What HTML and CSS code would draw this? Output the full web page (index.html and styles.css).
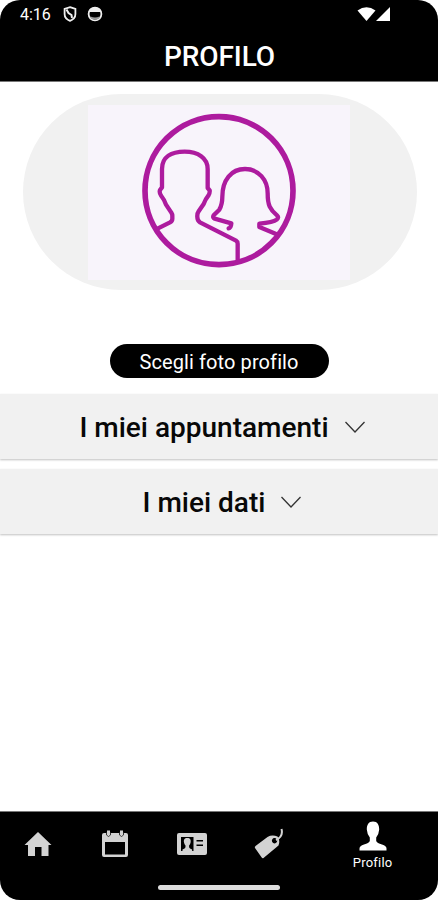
FILE: index.html
```html
<!DOCTYPE html>
<html lang="it">
<head>
    <meta charset="UTF-8">
    <meta name="viewport" content="width=device-width, initial-scale=1.0">
    <title>Profilo</title>
    <link rel="stylesheet" href="styles.css">
</head>
<body>
    <div class="phone">
        <header class="header">
            <div class="status-bar">
                <span class="time">4:16</span>
                <svg class="shield" width="14" height="16" viewBox="0 0 14 16">
                    <path d="M7 1.2 12.4 3v5c0 3-2.2 5.6-5.4 6.8C3.8 13.6 1.6 11 1.6 8V3z" fill="none" stroke="#eee" stroke-width="1.8"/>
                    <path d="M3.5 3.5 5.5 7 8.5 9 9 12" fill="none" stroke="#eee" stroke-width="2"/>
                </svg>
                <svg class="face" width="16" height="16" viewBox="0 0 16 16">
                    <circle cx="8" cy="8" r="6.4" fill="none" stroke="#eee" stroke-width="1.8"/>
                    <path d="M1.5 6h13L13 3 8 1 3 3z" fill="#eee"/>
                    <path d="M3.5 10.5Q8 12.5 12.5 10.5V12Q8 15 3.5 12z" fill="#999"/>
                </svg>
                <svg class="signal" width="34" height="16" viewBox="0 0 34 16">
                    <path d="M.5 4.5Q9.5-2 18.5 4.5L9.5 15z" fill="#fff"/>
                    <path d="M33 1v14H19z" fill="#fff"/>
                </svg>
            </div>
            <h1>PROFILO</h1>
        </header>

        <main>
            <div class="avatar">
                <svg width="262" height="175" viewBox="-126 15 786 525">
                    <rect class="avatar-bg" x="-126" y="15" width="786" height="525"/>
                    <circle cx="267" cy="272" r="222"/>
                    <path d="M84 385 120 367Q127 363 127 356V347Q127 343 124 338L108 314Q103 299 94 288Q87 278 90 270L96 262V207C96 171 124 155 164 155S233 174 233 207V264L239 271Q240 280 235 287Q226 298 221 312L206 334Q201 341 202 351Q202 362 210 367L318 422Q323 425 323 431V486"/>
                    <path d="M296 385Q303 384 304 370L254 356Q247 353 251 346L268 329Q277 313 277 290C277 240 304 207 345 207S413 240 413 280C413 316 420 329 441 346Q448 352 440 359Q430 367 388 371V381L440 403"/>
                </svg>
            </div>
            <button class="photo-button">Scegli foto profilo</button>

            <section class="row">
                <h2>I miei appuntamenti</h2>
                <svg width="22" height="14" viewBox="0 0 22 14"><path d="M1.5 2 11 12 20.5 2"/></svg>
            </section>
            <section class="row">
                <h2>I miei dati</h2>
                <svg width="22" height="14" viewBox="0 0 22 14"><path d="M1.5 2 11 12 20.5 2"/></svg>
            </section>
        </main>

        <footer>
            <nav class="tabs">
                <a class="tab">
                    <svg width="28" height="26" viewBox="0 0 28 26">
                        <path d="M14 1 27.5 14H24.5V25H17.5V16H11V25H4V14H.5z"/>
                    </svg>
                </a>
                <a class="tab">
                    <svg width="28" height="28" viewBox="0 0 28 28">
                        <path fill-rule="evenodd" d="M3 3H25Q27 3 27 5V25Q27 27 25 27H3Q1 27 1 25V5Q1 3 3 3zM4 12V24.5H24V12z"/>
                        <path class="rings" d="M5.5 2.5v2.5q2 3 4 0V2.5M18.5 2.5v2.5q2 3 4 0V2.5"/>
                        <path d="M6 .5h3v4q-1.5 2-3 0zM19 .5h3v4q-1.5 2-3 0z"/>
                    </svg>
                </a>
                <a class="tab">
                    <svg width="30" height="22" viewBox="0 0 30 22">
                        <rect width="30" height="22" rx="2"/>
                        <path d="M4 4h12.5v14H4zM19.5 7h6.500v1.500h-6.500zM19.5 11.500h6.500V13h-6.500z" fill="#000"/>
                        <path d="M10.3 5c-3 0-3.800 2-3.300 4.500q.4 2 1.500 3v1.700q-.3 1.500-3 2.300V18h9.600v-1.500q-2.700-.8-3-2.300v-1.700q1.100-1 1.500-3c.5-2.500-.3-4.500-3.300-4.500z"/>
                    </svg>
                </a>
                <a class="tab">
                    <svg width="30" height="32" viewBox="0 0 30 32">
                        <path fill-rule="evenodd" d="M1.5 18 13.5 9Q18 6.5 23.5 8.5Q26.5 13 24.5 17.5L9.5 30Q8.5 30.8 7.7 29.5L1 20Q.5 18.8 1.5 18zM20.5 10a2.7 2.7 0 1 0 .1 0z"/>
                        <path class="string" d="M22 12Q29.5 8.5 27.500 1"/>
                    </svg>
                </a>
                <a class="tab active">
                    <svg width="28" height="30" viewBox="0 0 28 30">
                        <path d="M14 .5C9.5.5 7.800 4 7.800 8.500Q8.200 13.500 10.800 16.500V20Q10 22 5 23.500Q.5 25 .5 27.500V29.500H27.500V27.500Q27.500 25 23 23.500Q18 22 17.200 20V16.500Q19.800 13.500 20.200 8.500C20.200 4 18.500.5 14 .5z"/>
                    </svg>
                    <span>Profilo</span>
                </a>
            </nav>
            <div class="home-bar"></div>
        </footer>
    </div>
</body>
</html>
```
FILE: styles.css
```css
* {
    box-sizing: border-box;
}
body {
    margin: 0;
    background-color: #fff;
    font-family: Roboto, sans-serif;
}
.phone {
    width: 438px;
    height: 900px;
    display: flex;
    flex-direction: column;
    border-radius: 20px;
    overflow: hidden;
}
.header {
    height: 82px;
    background-color: #000;
    color: #fff;
    border-bottom: 1px solid #777;
}
.status-bar {
    display: flex;
    align-items: center;
    height: 28px;
    padding: 0 47px 0 20px;
}
.time {
    width: 43px;
    font-size: 16px;
}
.face {
    margin-left: 10px;
}
.signal {
    margin-left: auto;
}
h1, h2 {
    margin: 0;
    font-weight: 500;
}
h1 {
    padding: 11px 0 0 1px;
    font-size: 28px;
    line-height: 36px;
    text-align: center;
    letter-spacing: -0.1px;
}
main {
    flex: 1;
}
.avatar {
    display: flex;
    width: 394px;
    height: 196px;
    margin: 12px auto 0 23px;
    padding: 11px 65px;
    border-radius: 98px;
    background-color: #f1f1f1;
}
.avatar path, .avatar circle {
    fill: none;
    stroke: #ad1b9e;
    stroke-width: 13px;
    stroke-linejoin: round;
    stroke-linecap: round;
}
.avatar circle {
    stroke-width: 17px;
}
.avatar-bg {
    fill: #f8f4fb;
}
.photo-button {
    display: block;
    width: 219px;
    height: 34px;
    margin: 54px auto 16px;
    padding: 2px 0 0;
    border: none;
    border-radius: 17px;
    background-color: #000;
    color: #fff;
    font-family: inherit;
    font-size: 20px;
    letter-spacing: 0.1px;
}
.row {
    display: flex;
    justify-content: center;
    align-items: center;
    gap: 15px;
    height: 65px;
    margin-bottom: 10px;
    padding: 1px 0 0 7px;
    background-color: #f1f1f1;
    box-shadow: 0 1px 2px rgba(0, 0, 0, 0.25);
}
.row h2 {
    padding-top: 2px;
    font-size: 28px;
    line-height: 36px;
    color: #080808;
}
.row path {
    fill: none;
    stroke: #333;
    stroke-width: 1.3px;
}
footer {
    height: 89px;
    border-top: 1px solid #777;
    background-color: #000;
}
.tabs {
    display: grid;
    grid-template-columns: repeat(4, 76.8px) 1fr;
    height: 63px;
}
.tab {
    display: flex;
    flex-direction: column;
    justify-content: center;
    align-items: center;
    fill: #d3d3d3;
    color: #fff;
}
.rings {
    fill: none;
    stroke: #333;
    stroke-width: 1px;
}
.string {
    fill: none;
    stroke: #d3d3d3;
    stroke-width: 2px;
}
.active {
    gap: 4px;
    padding-top: 4px;
    fill: #fff;
    font-size: 13px;
    line-height: 16px;
    letter-spacing: 0.2px;
}
.home-bar {
    width: 122px;
    height: 5px;
    margin: 10px auto 0;
    border-radius: 3px;
    background-color: #ddd;
}
```
